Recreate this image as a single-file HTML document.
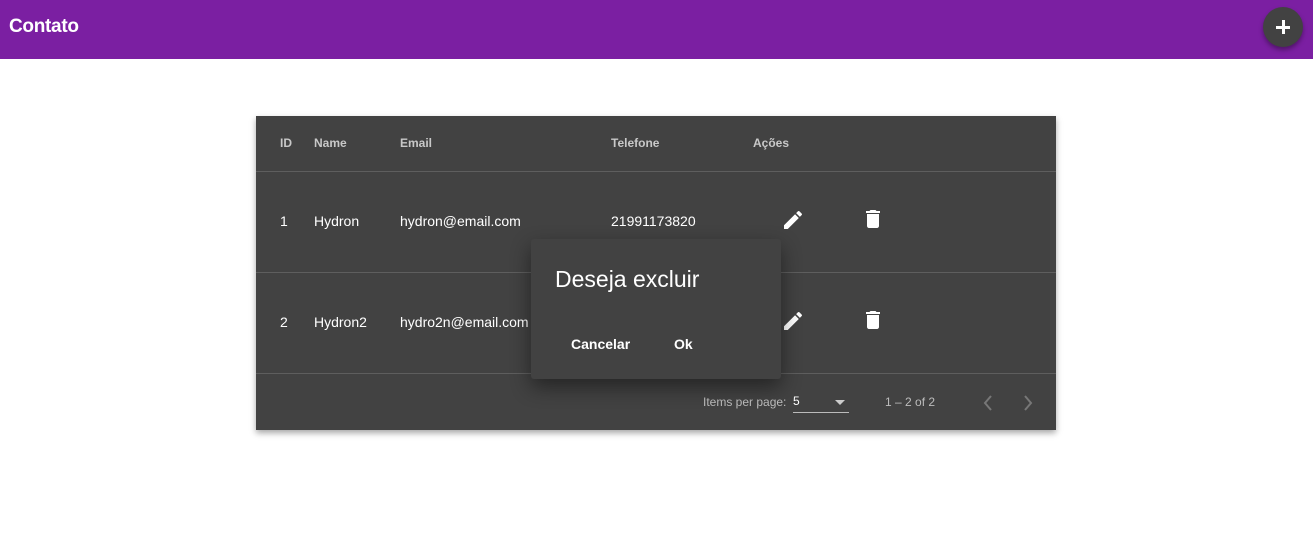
<!DOCTYPE html>
<html><head><meta charset="utf-8"><style>
*{box-sizing:border-box;margin:0;padding:0}
body{width:1313px;height:552px;background:#fff;font-family:"Liberation Sans",Arial,sans-serif;position:relative;overflow:hidden}
.bar{position:absolute;left:0;top:0;width:1313px;height:59px;background:#7b1fa2}
.bar .t{position:absolute;left:9px;top:16px;color:#fff;font-size:19px;font-weight:bold;letter-spacing:-0.3px}
.fab{position:absolute;left:1263px;top:7px;width:40px;height:40px;border-radius:50%;background:#424242;box-shadow:0 3px 5px rgba(0,0,0,.35)}
.fab:before{content:"";position:absolute;left:13px;top:19px;width:14px;height:2.5px;background:#fff}
.fab:after{content:"";position:absolute;left:19px;top:13px;width:2.5px;height:14px;background:#fff}
.card{position:absolute;left:256px;top:116px;width:800px;height:314px;background:#424242;box-shadow:0 3px 6px rgba(0,0,0,.35)}
.a{position:absolute;color:#fff;font-size:14px}
.h{position:absolute;color:#c8c8c8;font-size:12px;font-weight:bold;top:20px}
.ln{position:absolute;left:0;width:800px;height:1px;background:#5e5e5e}
.dlg{position:absolute;left:531px;top:239px;width:250px;height:140px;background:#424242;border-radius:3px;box-shadow:0 8px 20px rgba(0,0,0,.45)}
.s{position:absolute;color:#bdbdbd;font-size:12px}
</style></head><body>
<div class="bar"><div class="t">Contato</div><div class="fab"></div></div>
<div class="card">
<div class="h" style="left:24px">ID</div>
<div class="h" style="left:58px">Name</div>
<div class="h" style="left:144px">Email</div>
<div class="h" style="left:355px">Telefone</div>
<div class="h" style="left:497px">Ações</div>
<div class="ln" style="top:55px"></div>
<div class="a" style="left:24px;top:97px">1</div>
<div class="a" style="left:58px;top:97px">Hydron</div>
<div class="a" style="left:144px;top:97px">hydron@email.com</div>
<div class="a" style="left:355px;top:97px">21991173820</div>
<svg style="position:absolute;left:525px;top:92px" width="24" height="24" viewBox="0 0 24 24"><path fill="#fff" d="M3 17.25V21h3.75L17.81 9.94l-3.75-3.75L3 17.25zM20.71 7.04a1 1 0 0 0 0-1.41l-2.34-2.34a1 1 0 0 0-1.41 0l-1.83 1.83 3.75 3.75 1.83-1.83z"/></svg>
<svg style="position:absolute;left:605px;top:91px" width="24" height="24" viewBox="0 0 24 24"><path fill="#fff" d="M6 19c0 1.1.9 2 2 2h8c1.1 0 2-.9 2-2V7H6v12zM19 4h-3.5l-1-1h-5l-1 1H5v2h14V4z"/></svg>
<div class="ln" style="top:156px"></div>
<div class="a" style="left:24px;top:198px">2</div>
<div class="a" style="left:58px;top:198px">Hydron2</div>
<div class="a" style="left:144px;top:198px">hydro2n@email.com</div>
<svg style="position:absolute;left:525px;top:193px" width="24" height="24" viewBox="0 0 24 24"><path fill="#fff" d="M3 17.25V21h3.75L17.81 9.94l-3.75-3.75L3 17.25zM20.71 7.04a1 1 0 0 0 0-1.41l-2.34-2.34a1 1 0 0 0-1.41 0l-1.83 1.83 3.75 3.75 1.83-1.83z"/></svg>
<svg style="position:absolute;left:605px;top:192px" width="24" height="24" viewBox="0 0 24 24"><path fill="#fff" d="M6 19c0 1.1.9 2 2 2h8c1.1 0 2-.9 2-2V7H6v12zM19 4h-3.5l-1-1h-5l-1 1H5v2h14V4z"/></svg>
<div class="ln" style="top:257px"></div>
<div class="s" style="left:447px;top:279px">Items per page:</div>
<div class="a" style="left:537px;top:278px;font-size:12px">5</div>
<div style="position:absolute;left:537px;top:296px;width:56px;height:1px;background:#bbb"></div>
<div style="position:absolute;left:579px;top:284px;border-left:5px solid transparent;border-right:5px solid transparent;border-top:5px solid #ccc"></div>
<div class="s" style="left:629px;top:279px">1 – 2 of 2</div>
<svg style="position:absolute;left:722px;top:275px" width="20" height="24" viewBox="0 0 20 24"><path d="M13 5l-6 7 6 7" stroke="#777" stroke-width="2" fill="none"/></svg>
<svg style="position:absolute;left:762px;top:275px" width="20" height="24" viewBox="0 0 20 24"><path d="M7 5l6 7-6 7" stroke="#777" stroke-width="2" fill="none"/></svg>
</div>
<div class="dlg">
<div class="a" style="left:24px;top:27px;font-size:23px">Deseja excluir</div>
<div class="a" style="left:40px;top:97px;font-weight:bold">Cancelar</div>
<div class="a" style="left:143px;top:97px;font-weight:bold">Ok</div>
</div>
</body></html>
